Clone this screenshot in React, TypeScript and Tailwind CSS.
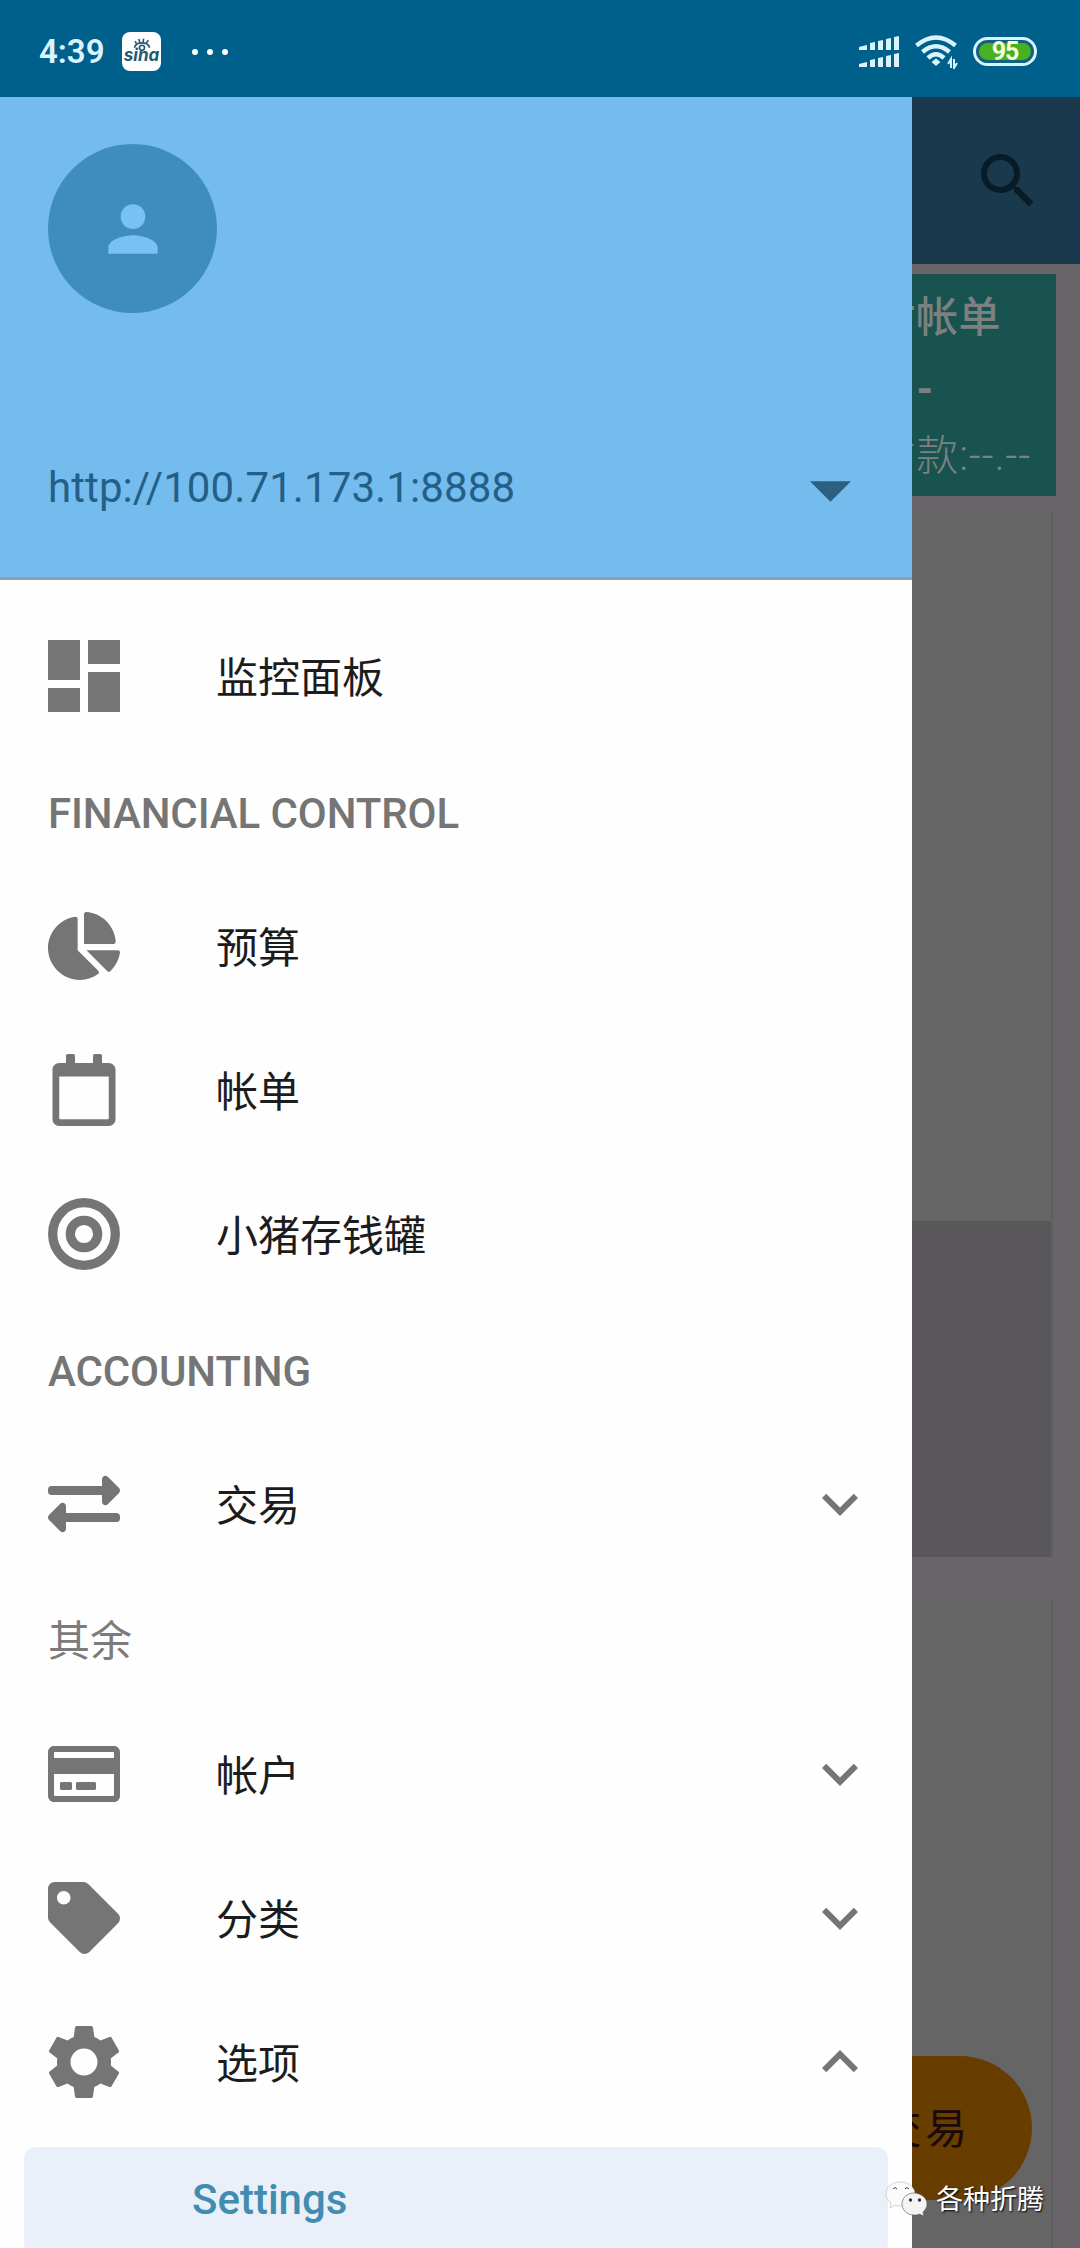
import type { ReactNode } from "react";
import { FaChartPie, FaExchangeAlt, FaRegCalendar, FaRegCreditCard, FaTag } from "react-icons/fa";
import { MdExpandLess, MdExpandMore, MdPerson, MdSearch, MdSettings } from "react-icons/md";

function SignalIcon() {
  const bars = "M0 14v-3l8-2v5zM11 14V7l5-1v8zM19 14V5l5-1v10zM27 14V3l5-1v12zM35 14V1l5-1v14z";
  return <svg className="w-10 h-8" viewBox="0 0 40 32" fill="currentColor" aria-hidden>
    <path d={bars} />
    <path d={bars} transform="translate(0 17)" />
  </svg>
}

function WifiIcon() {
  return <svg className="w-[43px] h-[34px]" viewBox="0 0 43 34" fill="none" stroke="currentColor" strokeWidth="4.500" aria-hidden>
    <path d="M1.500 10.500Q21 -5.500 40.500 10.500" />
    <path d="M7.500 17Q21 5.500 34.500 17" />
    <path d="M13 23Q21 15.500 29 23" />
    <path d="M21 23.500l4.500 3.500-4.500 4-4.500-4z" fill="currentColor" stroke="none" />
    <path d="M36 33V24l-3 5M39 24v9l3-5" strokeWidth="2" />
  </svg>
}

function SinaBadge() {
  return <div className="w-[39px] h-[39px] rounded-lg bg-white text-[#235a70] flex flex-col items-center">
    <svg className="w-[18px] h-[13px] mt-[6px]" viewBox="0 0 16 12" fill="none" stroke="currentColor" strokeWidth="1.500" aria-hidden>
      <path d="M1 9Q2 4.500 8 4.500T15 9" />
      <path d="M3 5L1.500 3M6 4L5 1M9 4l.5-3.500M12 4.500l2-2.500" />
      <circle cx="8" cy="9" r="2.300" />
    </svg>
    <span className="font-[Inter] italic font-bold text-[17px] leading-[12px] -mt-[2px]">sina</span>
  </div>
}

function DashboardIcon() {
  return <svg className="w-[72px] h-[72px]" viewBox="0 0 18 18" fill="currentColor" aria-hidden>
    <path d="M0 10h8V0H0zM0 18h8v-6H0zM10 18h8V8h-8zM10 0v6h8V0z" />
  </svg>
}

function TargetIcon() {
  return <svg className="w-[72px] h-[72px]" viewBox="0 0 72 72" fill="none" stroke="currentColor" strokeWidth="9.300" aria-hidden>
    <circle cx="36" cy="36" r="31.300" />
    <circle cx="36" cy="36" r="13.700" />
  </svg>
}

function StatusBar() {
  return <header className="h-[97px] bg-[#00608c] text-[#d9f4ff] flex items-center pl-[39px] pr-[43px] pt-[6px]">
    <span className="text-[33px] font-semibold leading-none w-[83px]">4:39</span>
    <SinaBadge />
    <div className="flex gap-[9px] ml-[31px]">
      <i className="w-1.5 h-1.5 rounded-full bg-white" />
      <i className="w-1.5 h-1.5 rounded-full bg-white" />
      <i className="w-1.5 h-1.5 rounded-full bg-white" />
    </div>
    <div className="ml-auto flex items-center">
      <SignalIcon />
      <div className="ml-4 mr-[15px]"><WifiIcon /></div>
      <div className="w-16 h-[29px] rounded-full border-[3px] border-current p-[3px] bg-[#15607c]">
        <div className="h-full rounded-full bg-[#47b122] flex items-center justify-center text-[25px] font-bold leading-none tracking-[-1px] text-[#f2ffd8]">95</div>
      </div>
    </div>
  </header>
}

function DrawerHeader() {
  return <div className="h-[483px] shrink-0 bg-[#74bced] border-b-[3px] border-[#8ba0b2] px-12 pt-[47px]">
    <div className="w-[169px] h-[169px] rounded-full bg-[#3f8dbd] text-[#77c1f4] flex items-center justify-center">
      <MdPerson className="w-[74px] h-[74px]" aria-hidden />
    </div>
    <div className="flex items-center justify-between mt-[150px] text-[#245f87]">
      <span className="text-[42px] leading-[50px] tracking-[0.1px]">http://100.71.173.1:8888</span>
      <svg className="w-[41px] h-[21px] mr-[13px] mt-[7px]" viewBox="0 0 40 20" fill="#2d5f7e" aria-hidden><path d="M0 0h40L20 20z" /></svg>
    </div>
  </div>
}

function Section({ title }: { title: string }) {
  return <div className="h-[126px] px-12 pt-1 flex items-center text-[42px] font-medium tracking-[-0.1px] text-[#757575]">{title}</div>
}

function Item({ icon, label, arrow }: { icon: ReactNode; label: string; arrow?: "up" | "down" }) {
  return <div className="h-36 pl-12 pr-9 flex items-center text-[#757575]">
    <div className="w-[72px] h-[72px] flex items-center justify-center">{icon}</div>
    <span className="ml-24 pt-1 text-[42px] text-[#1c1c1c]">{label}</span>
    {arrow === "down" && <MdExpandMore className="ml-auto w-[72px] h-[72px]" aria-hidden />}
    {arrow === "up" && <MdExpandLess className="ml-auto w-[72px] h-[72px]" aria-hidden />}
  </div>
}

function Drawer() {
  return <nav className="absolute left-0 top-0 w-[912px] h-full bg-[#fefefe] flex flex-col overflow-hidden">
    <DrawerHeader />
    <div className="pt-6">
      <Item icon={<DashboardIcon />} label="监控面板" />
      <Section title="FINANCIAL CONTROL" />
      <Item icon={<FaChartPie className="w-[72px] h-[68px]" />} label="预算" />
      <Item icon={<FaRegCalendar className="w-[72px] h-[72px]" />} label="帐单" />
      <Item icon={<TargetIcon />} label="小猪存钱罐" />
      <Section title="ACCOUNTING" />
      <Item icon={<FaExchangeAlt className="w-[72px] h-[72px]" />} label="交易" arrow="down" />
      <div className="h-[126px] px-12 pt-1 flex items-center text-[42px] text-[#7b7b7b]">其余</div>
      <Item icon={<FaRegCreditCard className="w-[72px] h-[64px]" />} label="帐户" arrow="down" />
      <Item icon={<FaTag className="w-[72px] h-[72px]" />} label="分类" arrow="down" />
      <Item icon={<MdSettings className="w-[90px] h-[90px] shrink-0" />} label="选项" arrow="up" />
      <div className="mt-[13px] mx-6 h-[108px] rounded-xl bg-[#eaf0f9] pl-[168px] pb-1 flex items-center text-[42px] font-medium text-[#428cb0]">Settings</div>
    </div>
  </nav>
}

// Dashboard behind the open drawer, already dimmed
function Dashboard() {
  return <section className="h-full bg-[#676568] flex flex-col">
    <div className="h-[167px] shrink-0 bg-[#1a394d] text-[#071c27] flex items-center justify-end pr-9">
      <MdSearch className="w-[72px] h-[72px]" aria-hidden />
    </div>
    <div className="mt-[10px] mr-6 h-[222px] shrink-0 bg-[#185350] text-[#7d8080] text-[42px] flex flex-col items-end">
      <span className="mt-[20px] mr-[55px] h-12 leading-[48px] font-medium tracking-[0.5px]">待付帐单</span>
      <span className="mt-6 mr-[119px] h-12 leading-[48px] font-bold tracking-[4px]">--.--</span>
      <span className="mt-[18px] mr-[25px] h-12 leading-[48px] font-light tracking-[0.8px]">应付款:--.--</span>
    </div>
    <div className="mt-[15px] mr-[27px] h-[1046px] shrink-0 bg-[#656565] border-r-2 border-[#605f62] flex flex-col">
      <div className="mt-[710px] h-[336px] bg-[#59575a]" />
    </div>
    <div className="mt-[43px] mr-[27px] grow bg-[#656565] border-r-2 border-[#605f62]" />
  </section>
}

function NewTransactionButton() {
  return <div className="absolute right-12 top-[1959px] w-[400px] h-36 rounded-full bg-[#673d00] text-[#1b090c] flex items-center justify-end pr-[61px] pt-0.5 text-[42px] tracking-[3.750px]">新交易</div>
}

function Watermark() {
  return <div className="absolute right-9 top-[2083px] flex items-center text-white">
    <svg className="w-[43px] h-9 mr-2" viewBox="0 0 43 36" aria-hidden>
      <path d="M15 1C7 1 1 6 1 13c0 4 2 7 5 9l-1 5 5-3c2 1 4 1 7 1 8 0 13-5 13-12S23 1 15 1z" fill="#fbfbfb" stroke="#aaa" strokeWidth=".5" />
      <path d="M29 12c7 0 13 5 13 11 0 4-2 6-4 8l1 4-5-2c-1 1-3 1-5 1-7 0-12-5-12-11s5-11 12-11z" fill="#f4f4f4" stroke="#555" strokeWidth=".6" />
      <path d="M8 8q2-3 4 0M20 8q2-3 4 0" fill="none" stroke="#444" strokeWidth="1" />
      <circle cx="25.500" cy="19" r="1.700" fill="#333" />
      <circle cx="34.500" cy="19" r="1.700" fill="#333" />
    </svg>
    <span className="pt-0.5 text-[27px] leading-9 [text-shadow:1px_1px_2px_#000]">各种折腾</span>
  </div>
}

export default function App() {
  return <div className="w-[1080px] h-[2248px] overflow-hidden flex flex-col font-[Roboto,'Noto_Sans_CJK_SC',sans-serif]">
    <StatusBar />
    <main className="relative grow overflow-hidden">
      <Dashboard />
      <NewTransactionButton />
      <Drawer />
      <Watermark />
    </main>
  </div>
}
